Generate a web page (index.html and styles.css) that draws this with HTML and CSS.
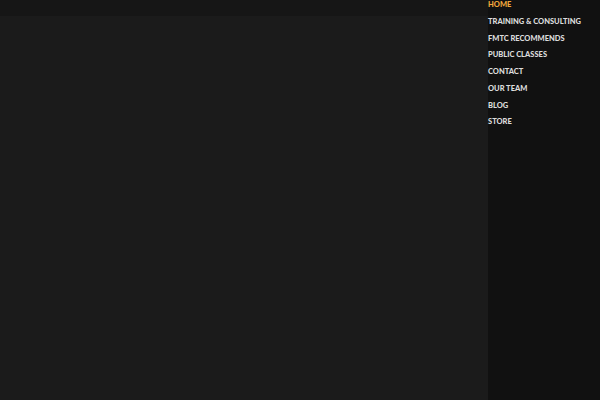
FILE: index.html
```html
<!DOCTYPE html>
<html lang="en">
<head>
<meta charset="utf-8">
<title>FMTC</title>
<link rel="stylesheet" href="styles.css">
</head>
<body>
<div class="page">
  <div class="main">
    <header class="topbar"></header>
    <section class="content"></section>
  </div>
  <aside class="sidebar">
    <nav>
      <ul class="menu">
        <li class="item active">HOME</li>
        <li class="item">TRAINING &amp; CONSULTING</li>
        <li class="item">FMTC RECOMMENDS</li>
        <li class="item">PUBLIC CLASSES</li>
        <li class="item">CONTACT</li>
        <li class="item">OUR TEAM</li>
        <li class="item">BLOG</li>
        <li class="item">STORE</li>
      </ul>
    </nav>
  </aside>
</div>
</body>
</html>
```
FILE: styles.css
```css
html, body {
  margin: 0;
  padding: 0;
  height: 100%;
  background: #1b1b1b;
}
.page {
  display: grid;
  grid-template-columns: 488px 112px;
  height: 400px;
  overflow: hidden;
}
.main {
  display: flex;
  flex-direction: column;
}
.topbar {
  height: 16px;
  background: #161616;
}
.content {
  flex: 1;
  background: #1b1b1b;
}
.sidebar {
  background: #111111;
}
.menu {
  list-style: none;
  margin: 0;
  padding: 0;
  font-family: "Lato", "DejaVu Sans", sans-serif;
  font-weight: 900;
  font-size: 7.5px;
  letter-spacing: 0;
  color: #dcdcdc;
}
.item {
  height: 16.75px;
  line-height: 9px;
  white-space: nowrap;
}
.item.active {
  color: #f0a63c;
}
```
